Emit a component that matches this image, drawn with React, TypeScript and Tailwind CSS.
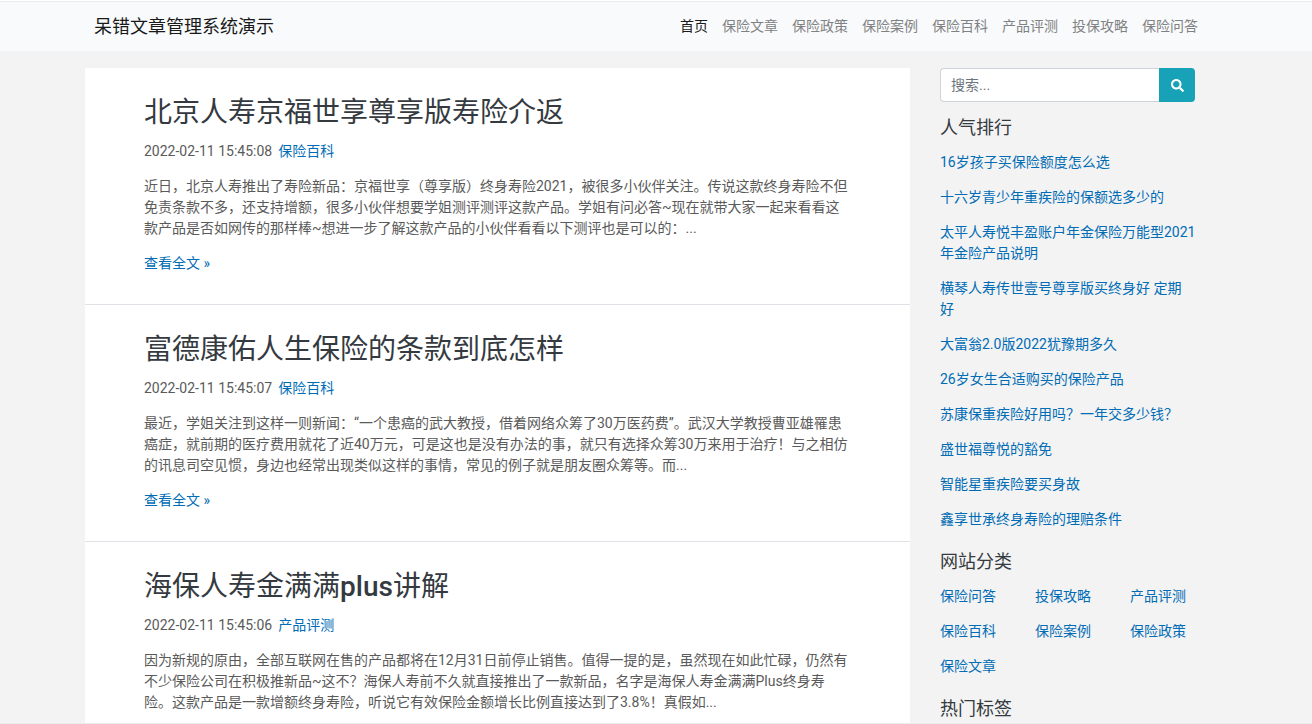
import React from "react";
import { FaSearch } from "react-icons/fa";

const navItems = [
  "首页",
  "保险文章",
  "保险政策",
  "保险案例",
  "保险百科",
  "产品评测",
  "投保攻略",
  "保险问答",
];

const articles = [
  {
    title: "北京人寿京福世享尊享版寿险介返",
    date: "2022-02-11 15:45:08",
    category: "保险百科",
    summary:
      "近日，北京人寿推出了寿险新品：京福世享（尊享版）终身寿险2021，被很多小伙伴关注。传说这款终身寿险不但免责条款不多，还支持增额，很多小伙伴想要学姐测评测评这款产品。学姐有问必答~现在就带大家一起来看看这款产品是否如网传的那样棒~想进一步了解这款产品的小伙伴看看以下测评也是可以的：...",
    more: "查看全文 »",
  },
  {
    title: "富德康佑人生保险的条款到底怎样",
    date: "2022-02-11 15:45:07",
    category: "保险百科",
    summary:
      "最近，学姐关注到这样一则新闻：“一个患癌的武大教授，借着网络众筹了30万医药费”。武汉大学教授曹亚雄罹患癌症，就前期的医疗费用就花了近40万元，可是这也是没有办法的事，就只有选择众筹30万来用于治疗！与之相仿的讯息司空见惯，身边也经常出现类似这样的事情，常见的例子就是朋友圈众筹等。而...",
    more: "查看全文 »",
  },
  {
    title: (
      <>
        海保人寿金满满<span className="font-medium">plus</span>讲解
      </>
    ),
    date: "2022-02-11 15:45:06",
    category: "产品评测",
    summary:
      "因为新规的原由，全部互联网在售的产品都将在12月31日前停止销售。值得一提的是，虽然现在如此忙碌，仍然有不少保险公司在积极推新品~这不？海保人寿前不久就直接推出了一款新品，名字是海保人寿金满满Plus终身寿险。这款产品是一款增额终身寿险，听说它有效保险金额增长比例直接达到了3.8%！真假如...",
  },
];

const ranking = [
  "16岁孩子买保险额度怎么选",
  "十六岁青少年重疾险的保额选多少的",
  "太平人寿悦丰盈账户年金保险万能型2021\n年金险产品说明",
  "横琴人寿传世壹号尊享版买终身好 定期\n好",
  "大富翁2.0版2022犹豫期多久",
  "26岁女生合适购买的保险产品",
  "苏康保重疾险好用吗？一年交多少钱？",
  "盛世福尊悦的豁免",
  "智能星重疾险要买身故",
  "鑫享世承终身寿险的理赔条件",
];

const categories = [
  "保险问答",
  "投保攻略",
  "产品评测",
  "保险百科",
  "保险案例",
  "保险政策",
  "保险文章",
];

type ArticleProps = {
  title: React.ReactNode;
  date: string;
  category: string;
  summary: string;
  more?: string;
};

function Header() {
  return (
    <header className="border-t border-[#e9ecef] bg-[#f8fafc] pr-8">
      <div className="mx-auto flex h-[49px] max-w-[1140px] items-center justify-between pl-6 pr-3">
        <a href="#" className="text-lg leading-[21px] text-[#1a1a1a]">
          呆错文章管理系统演示
        </a>
        <nav className="flex gap-[14px]">
          {navItems.map((item, index) => (
            <a
              key={item}
              href="#"
              className={index === 0 ? "text-[#1a1a1a]" : "text-[#808182]"}
            >
              {item}
            </a>
          ))}
        </nav>
      </div>
    </header>
  );
}

function Article({ title, date, category, summary, more }: ArticleProps) {
  return (
    <article className="border-b border-[#dee2e6] bg-white px-[59px] pt-7 pb-[30px]">
      <h2 className="mb-[11px] text-[28px] leading-[34px] text-[#343a40]">
        {title}
      </h2>
      <p className="mb-[14px]">
        {date}
        <a href="#" className="ml-[6px] text-[#006cb5]">
          {category}
        </a>
      </p>
      <p className="mb-[14px]">{summary}</p>
      {more && (
        <a href="#" className="block text-[#006cb5]">
          {more}
        </a>
      )}
    </article>
  );
}

function SideTitle({ children }: { children: React.ReactNode }) {
  return (
    <h3 className="mb-[14px] text-lg leading-[21px] text-[#343a40]">{children}</h3>
  );
}

export default function App() {
  return (
    <div
      lang="zh-CN"
      className="h-screen overflow-hidden border-b border-[#ececec] bg-[#f3f3f3] font-[Roboto,'Noto_Sans_CJK_SC',sans-serif] text-[14px] leading-[21px] text-[#5a5a5a]"
    >
      <div className="bg-white pt-px">
        <Header />
      </div>

      <div className="pr-8">
        <div className="mx-auto flex max-w-[1140px] items-start gap-[30px] px-[15px] pt-[17px]">
          <main className="min-w-0 flex-1">
            {articles.map((article) => (
              <Article key={article.date} {...article} />
            ))}
          </main>

          <aside className="w-[255px] shrink-0">
            {/* Search */}
            <form className="mb-[15px] flex h-[34px]" onSubmit={(e) => e.preventDefault()}>
              <input
                type="text"
                aria-label="搜索"
                placeholder="搜索..."
                className="min-w-0 flex-1 rounded-l border border-r-0 border-[#ced4da] bg-white px-[10px] placeholder:text-[#6c757d]"
              />
              <button
                type="submit"
                aria-label="搜索"
                className="flex w-9 items-center justify-center rounded-r bg-[#17a2b8] text-white"
              >
                <FaSearch className="h-[13px] w-[13px]" />
              </button>
            </form>

            {/* Ranking */}
            <SideTitle>人气排行</SideTitle>
            <ul className="mb-[21px] flex flex-col gap-[14px] text-[#006cb5]">
              {ranking.map((item) => (
                <li key={item} className="whitespace-pre">
                  <a href="#">{item}</a>
                </li>
              ))}
            </ul>

            {/* Categories */}
            <SideTitle>网站分类</SideTitle>
            <ul className="mb-[21px] grid grid-cols-3 gap-x-[30px] gap-y-[14px] text-[#006cb5]">
              {categories.map((item) => (
                <li key={item}>
                  <a href="#">{item}</a>
                </li>
              ))}
            </ul>

            <SideTitle>热门标签</SideTitle>
          </aside>
        </div>
      </div>
    </div>
  );
}
